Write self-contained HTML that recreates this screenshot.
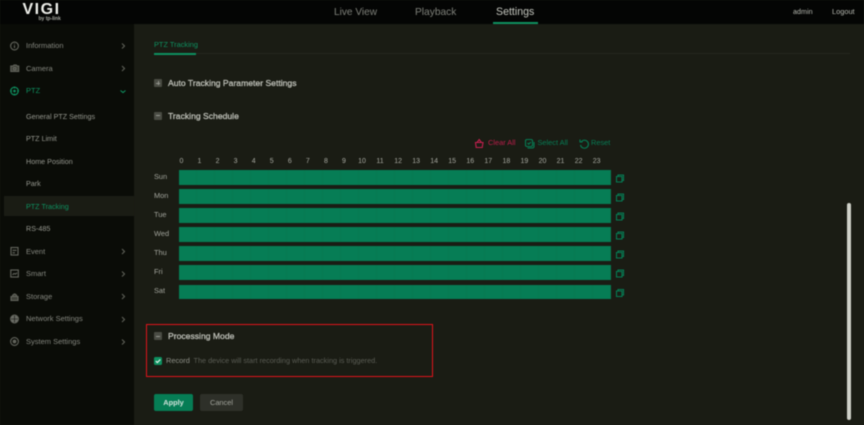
<!DOCTYPE html>
<html lang="en"><head><meta charset="utf-8"><title>VIGI PTZ Tracking</title>
<style>
*{margin:0;padding:0;box-sizing:border-box}
html,body{width:864px;height:425px;overflow:hidden;background:#1a1c14}
body{position:relative;font-family:"Liberation Sans",sans-serif}
#wrap{position:absolute;inset:0;filter:blur(.45px)}
.a{position:absolute;white-space:nowrap}
#top{left:0;top:0;width:864px;height:24px;background:#040504}
#side{left:0;top:24px;width:134px;height:401px;background:#0a0c07}
.m{left:26px;font-size:7.5px;line-height:10px;color:#85877f}
.s{left:26px;font-size:7.2px;line-height:10px;color:#96988f}
.g{color:#0e9160}
.h{font-size:7px;line-height:10px;color:#a8aaa2;width:14px;text-align:center}
.d{left:154px;font-size:7.4px;line-height:10px;color:#a2a49c}
.bar{left:179px;width:431.5px;height:14.5px;background-color:#067d55;background-image:repeating-linear-gradient(90deg,transparent 0,transparent 17px,#077a52 17px,#077a52 18px)}
.sec{left:168px;font-size:8.6px;line-height:12px;color:#c3c5bd;-webkit-text-stroke:.25px #c3c5bd}
.box{left:154px;width:8px;height:8px;background:#4a4c44;border-radius:1px}
.box:after{content:"";position:absolute;left:2px;top:3.5px;width:4px;height:1px;background:#95978f}
.plus:before{content:"";position:absolute;left:3.5px;top:2px;width:1px;height:4px;background:#95978f}
svg{position:absolute;overflow:visible}
</style></head><body><div id="wrap">
<div class="a" id="top"></div>
<div class="a" id="side"></div>

<!-- logo -->
<div class="a" style="left:22.5px;top:.5px;font-size:16px;line-height:17px;font-weight:bold;color:#eeefea;letter-spacing:1.5px">VIGI</div>
<div class="a" style="left:38.5px;top:16px;font-size:5px;line-height:7px;font-weight:bold;color:#a8aaa2">by tp-link</div>

<!-- top nav -->
<div class="a" style="left:334px;top:5.5px;font-size:10.1px;line-height:13px;color:#7f817a">Live View</div>
<div class="a" style="left:415px;top:5.5px;font-size:10.2px;line-height:13px;color:#7f817a">Playback</div>
<div class="a" style="left:496px;top:5.5px;font-size:10.6px;line-height:13px;color:#c4c6be">Settings</div>
<div class="a" style="left:493px;top:22px;width:45px;height:1.5px;background:#0e9160"></div>
<div class="a" style="left:793px;top:6.5px;font-size:7.2px;line-height:10px;color:#b6b8b0">admin</div>
<div class="a" style="left:832px;top:6.5px;font-size:7.4px;line-height:10px;color:#b6b8b0">Logout</div>

<!-- sidebar -->
<div class="a" style="left:4px;top:196px;width:130px;height:20px;background:#1a1c14"></div>
<div class="a m" style="top:41px">Information</div>
<div class="a m" style="top:63.5px">Camera</div>
<div class="a m g" style="top:86px">PTZ</div>
<div class="a s" style="top:111.5px">General PTZ Settings</div>
<div class="a s" style="top:134px">PTZ Limit</div>
<div class="a s" style="top:156.5px">Home Position</div>
<div class="a s" style="top:179px">Park</div>
<div class="a s g" style="top:201.5px">PTZ Tracking</div>
<div class="a s" style="top:224px">RS-485</div>
<div class="a m" style="top:246.5px">Event</div>
<div class="a m" style="top:269px">Smart</div>
<div class="a m" style="top:291.5px">Storage</div>
<div class="a m" style="top:314px">Network Settings</div>
<div class="a m" style="top:336.5px">System Settings</div>

<svg style="left:0;top:0" width="134" height="425" fill="none" stroke="#64665e" stroke-width="1.100">
<circle cx="14.5" cy="46" r="3.9"/><path d="M14.5 45.2v2.8M14.5 43.6v.6"/>
<path d="M10.8 66h2.2l1-1h2.200l1 1h1.500v5.500H10.800z" fill="#3f4139"/><circle cx="14.7" cy="68.700" r="1.300"/>
<circle cx="14.500" cy="91" r="3.800" stroke="#0e9160"/><circle cx="14.500" cy="91" r="1.300" fill="#0e9160" stroke="none"/>
<path d="M14.500 86.600v1.800M14.500 93.600v1.800M10.200 91H12M17 91h1.800" stroke="#0e9160"/>
<rect x="11" y="247.500" width="7" height="7.500"/><path d="M12.500 250.300h4M12.500 252.800h2.500"/>
<rect x="10.800" y="270" width="7.500" height="7"/><path d="M12.500 274.800l1.500-1.300 1.500.6 1.500-1.300"/>
<path d="M11 296.500h7v4h-7zM12.600 296.500v-1.200l1.500-1.300h1l1.500 1.300v1.200" fill="#3f4139"/>
<circle cx="14.500" cy="319" r="3.900" fill="#6a6c65"/><path d="M11 319h7M14.500 315.500v7" stroke="#0a0c07" stroke-width=".6"/>
<circle cx="14.500" cy="341.500" r="3.900"/><circle cx="14.500" cy="341.500" r="1.300" fill="#5d5f58"/>
<path d="M122 43.500l2.500 2.500-2.500 2.500M122 66l2.500 2.500-2.500 2.500M122 249l2.500 2.500-2.500 2.500M122 271.500l2.500 2.500-2.500 2.500M122 294l2.500 2.500-2.500 2.500M122 317l2.500 2.500-2.500 2.500M122 339.500l2.500 2.500-2.500 2.500" stroke="#5e6058"/>
<path d="M120.500 90.500l2.500 2 2.500-2" stroke="#0e9160"/>
</svg>

<!-- tab -->
<div class="a g" style="left:154px;top:39.500px;font-size:7.400px;line-height:10px">PTZ Tracking</div>
<div class="a" style="left:154px;top:53px;width:696px;height:1px;background:#26281f"></div>
<div class="a" style="left:154px;top:53px;width:42px;height:1.500px;background:#0e9160"></div>

<!-- sections -->
<div class="a box plus" style="top:79px"></div>
<div class="a sec" style="top:77px">Auto Tracking Parameter Settings</div>
<div class="a box" style="top:111.500px"></div>
<div class="a sec" style="top:109.500px">Tracking Schedule</div>

<!-- toolbar -->
<svg style="left:0;top:0" width="864" height="425" fill="none">
<g stroke="#c4204f" stroke-width="1.100"><path d="M475.500 142.500h7.500l-.8 5h-6zM477 142.500l2.200-3 2.200 3M475 142.500h8.500"/></g>
<g stroke="#067d55" stroke-width="1.100"><rect x="525.500" y="139.500" width="7" height="7" rx="1.500"/><path d="M527.500 148h5.500l1-1v-5M527.500 143l1.200 1.200 2.200-2.200"/>
<path d="M581.500 141.500a4 4 0 1 1-1 3.500M580 139.500v2.500h2.500"/></g>
</svg>
<div class="a" style="left:488px;top:138px;font-size:7.400px;line-height:10px;color:#bb1e4b">Clear All</div>
<div class="a" style="left:537.500px;top:138px;font-size:7.400px;line-height:10px;color:#067d55">Select All</div>
<div class="a" style="left:591px;top:138px;font-size:7.400px;line-height:10px;color:#067d55">Reset</div>

<!-- hours -->
<div class="a h" style="left:174.500px;top:156.500px">0</div>
<div class="a h" style="left:192.500px;top:156.500px">1</div>
<div class="a h" style="left:210.600px;top:156.500px">2</div>
<div class="a h" style="left:228.600px;top:156.500px">3</div>
<div class="a h" style="left:246.700px;top:156.500px">4</div>
<div class="a h" style="left:264.700px;top:156.500px">5</div>
<div class="a h" style="left:282.800px;top:156.500px">6</div>
<div class="a h" style="left:300.800px;top:156.500px">7</div>
<div class="a h" style="left:318.900px;top:156.500px">8</div>
<div class="a h" style="left:336.900px;top:156.500px">9</div>
<div class="a h" style="left:355px;top:156.500px">10</div>
<div class="a h" style="left:373px;top:156.500px">11</div>
<div class="a h" style="left:391.100px;top:156.500px">12</div>
<div class="a h" style="left:409.100px;top:156.500px">13</div>
<div class="a h" style="left:427.200px;top:156.500px">14</div>
<div class="a h" style="left:445.200px;top:156.500px">15</div>
<div class="a h" style="left:463.300px;top:156.500px">16</div>
<div class="a h" style="left:481.300px;top:156.500px">17</div>
<div class="a h" style="left:499.400px;top:156.500px">18</div>
<div class="a h" style="left:517.400px;top:156.500px">19</div>
<div class="a h" style="left:535.500px;top:156.500px">20</div>
<div class="a h" style="left:553.500px;top:156.500px">21</div>
<div class="a h" style="left:571.600px;top:156.500px">22</div>
<div class="a h" style="left:589.600px;top:156.500px">23</div>

<!-- schedule -->
<div class="a d" style="top:172px">Sun</div><div class="a bar" style="top:170px"></div>
<div class="a d" style="top:191px">Mon</div><div class="a bar" style="top:189px"></div>
<div class="a d" style="top:210px">Tue</div><div class="a bar" style="top:208px"></div>
<div class="a d" style="top:229px">Wed</div><div class="a bar" style="top:227px"></div>
<div class="a d" style="top:248px">Thu</div><div class="a bar" style="top:246px"></div>
<div class="a d" style="top:267px">Fri</div><div class="a bar" style="top:265px"></div>
<div class="a d" style="top:286px">Sat</div><div class="a bar" style="top:284.500px"></div>

<svg style="left:0;top:0" width="864" height="425" fill="none" stroke="#067d55" stroke-width="1.100">
<path d="M616.500 176.500h5.500v5.500h-5.500zM618 176.500v-1.500h5.500v5.500h-1.500"/>
<path d="M616.500 195.500h5.500v5.500h-5.500zM618 195.500v-1.500h5.500v5.500h-1.500"/>
<path d="M616.500 214.500h5.500v5.500h-5.500zM618 214.500v-1.500h5.500v5.500h-1.500"/>
<path d="M616.500 233.500h5.500v5.500h-5.500zM618 233.500v-1.500h5.500v5.500h-1.500"/>
<path d="M616.500 252.500h5.500v5.500h-5.500zM618 252.500v-1.500h5.500v5.500h-1.500"/>
<path d="M616.500 271.500h5.500v5.500h-5.500zM618 271.500v-1.500h5.500v5.500h-1.500"/>
<path d="M616.500 291h5.500v5.500h-5.500zM618 291v-1.500h5.500v5.500h-1.500"/>
</svg>

<!-- processing mode -->
<div class="a" style="left:145.500px;top:323.500px;width:287px;height:53.500px;border:1.700px solid #e0141c"></div>
<div class="a box" style="top:332px"></div>
<div class="a sec" style="top:330px">Processing Mode</div>
<div class="a" style="left:154px;top:357px;width:8px;height:8px;background:#0e9160;border-radius:1.500px"></div>
<svg style="left:0;top:0" width="864" height="425" fill="none" stroke="#e6f2ec" stroke-width="1.200"><path d="M155.800 361l1.500 1.500 3-3"/></svg>
<div class="a" style="left:166px;top:355.500px;font-size:7.400px;line-height:10px;color:#8f9189">Record</div>
<div class="a" style="left:193.500px;top:355.500px;font-size:7.300px;line-height:10px;color:#5b5d55">The device will start recording when tracking is triggered.</div>

<!-- buttons -->
<div class="a" style="left:154px;top:394px;width:39px;height:17px;background:#067d55;border-radius:2px;color:#cfe3da;font-size:7.400px;line-height:17px;text-align:center;font-weight:bold">Apply</div>
<div class="a" style="left:200px;top:394px;width:43px;height:17px;background:#2e3029;border-radius:2px;color:#a2a49c;font-size:7.400px;line-height:17px;text-align:center">Cancel</div>

<!-- scrollbar -->
<div class="a" style="left:847px;top:203px;width:3.500px;height:217px;background:#cfd1c9;border-radius:2px"></div>
</div></body></html>
